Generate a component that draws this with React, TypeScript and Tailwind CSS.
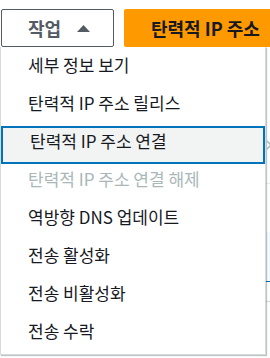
import React from "react";

const items = [
  { label: "세부 정보 보기" },
  { label: "탄력적 IP 주소 릴리스" },
  { label: "탄력적 IP 주소 연결", active: true },
  { label: "탄력적 IP 주소 연결 해제", disabled: true },
  { label: "역방향 DNS 업데이트" },
  { label: "전송 활성화" },
  { label: "전송 비활성화" },
  { label: "전송 수락" },
];

export default function App() {
  return (
    <div
      className="relative w-[270px] h-[358px] overflow-hidden bg-white"
      style={{ fontFamily: '"Noto Sans CJK KR", "Noto Sans", sans-serif' }}
    >
      <div className="flex pt-[9px] pl-[1px]">
        <button className="flex h-[38px] w-[113px] shrink-0 items-center rounded-[2px] border border-[#545b64] bg-white pl-[26px] text-[18px] font-bold text-[#545b64]">
          <span>작업</span>
          <svg width="13" height="7" viewBox="0 0 13 7" className="ml-[16px]">
            <polygon points="6.5,0 13,7 0,7" fill="#545b64" />
          </svg>
        </button>
        <button className="ml-[10px] flex h-[38px] w-[200px] shrink-0 items-center whitespace-nowrap rounded-[2px] bg-[#ff9900] pl-[27px] text-[18px] font-bold text-[#16191f]">
          탄력적 IP 주소
        </button>
      </div>

      {/* background table hints */}
      <div className="mt-[136px] h-px bg-[#eaeded]" />
      <div className="mt-[48px] h-[50px] border-b border-[#0073bb] bg-[#f1faff]" />
      <div className="mt-[19px] h-px bg-[#d5dbdb]" />

      <div className="absolute left-0 top-[47px] w-[266px] border border-t-0 border-[#d5dbdb] bg-white pt-[3px] shadow-[1px_1px_1px_rgba(0,22,29,0.25)]">
        {items.map((it) => (
          <div
            key={it.label}
            className={
              "flex h-[38px] items-center whitespace-nowrap pb-[9px] pl-[27px] text-[17px] " +
              (it.active
                ? "border-2 border-[#0073bb] bg-[#f2f3f3] pl-[25px] text-[#16191f]"
                : it.disabled
                ? "text-[#aab7b8]"
                : "text-[#16191f]")
            }
          >
            {it.label}
          </div>
        ))}
      </div>
      <svg width="6" height="10" viewBox="0 0 6 10" className="absolute left-[266px] top-[140px]">
        <polyline points="1,1 5,5 1,9" fill="none" stroke="#aab7b8" strokeWidth="1.5" />
      </svg>
    </div>
  );
}
